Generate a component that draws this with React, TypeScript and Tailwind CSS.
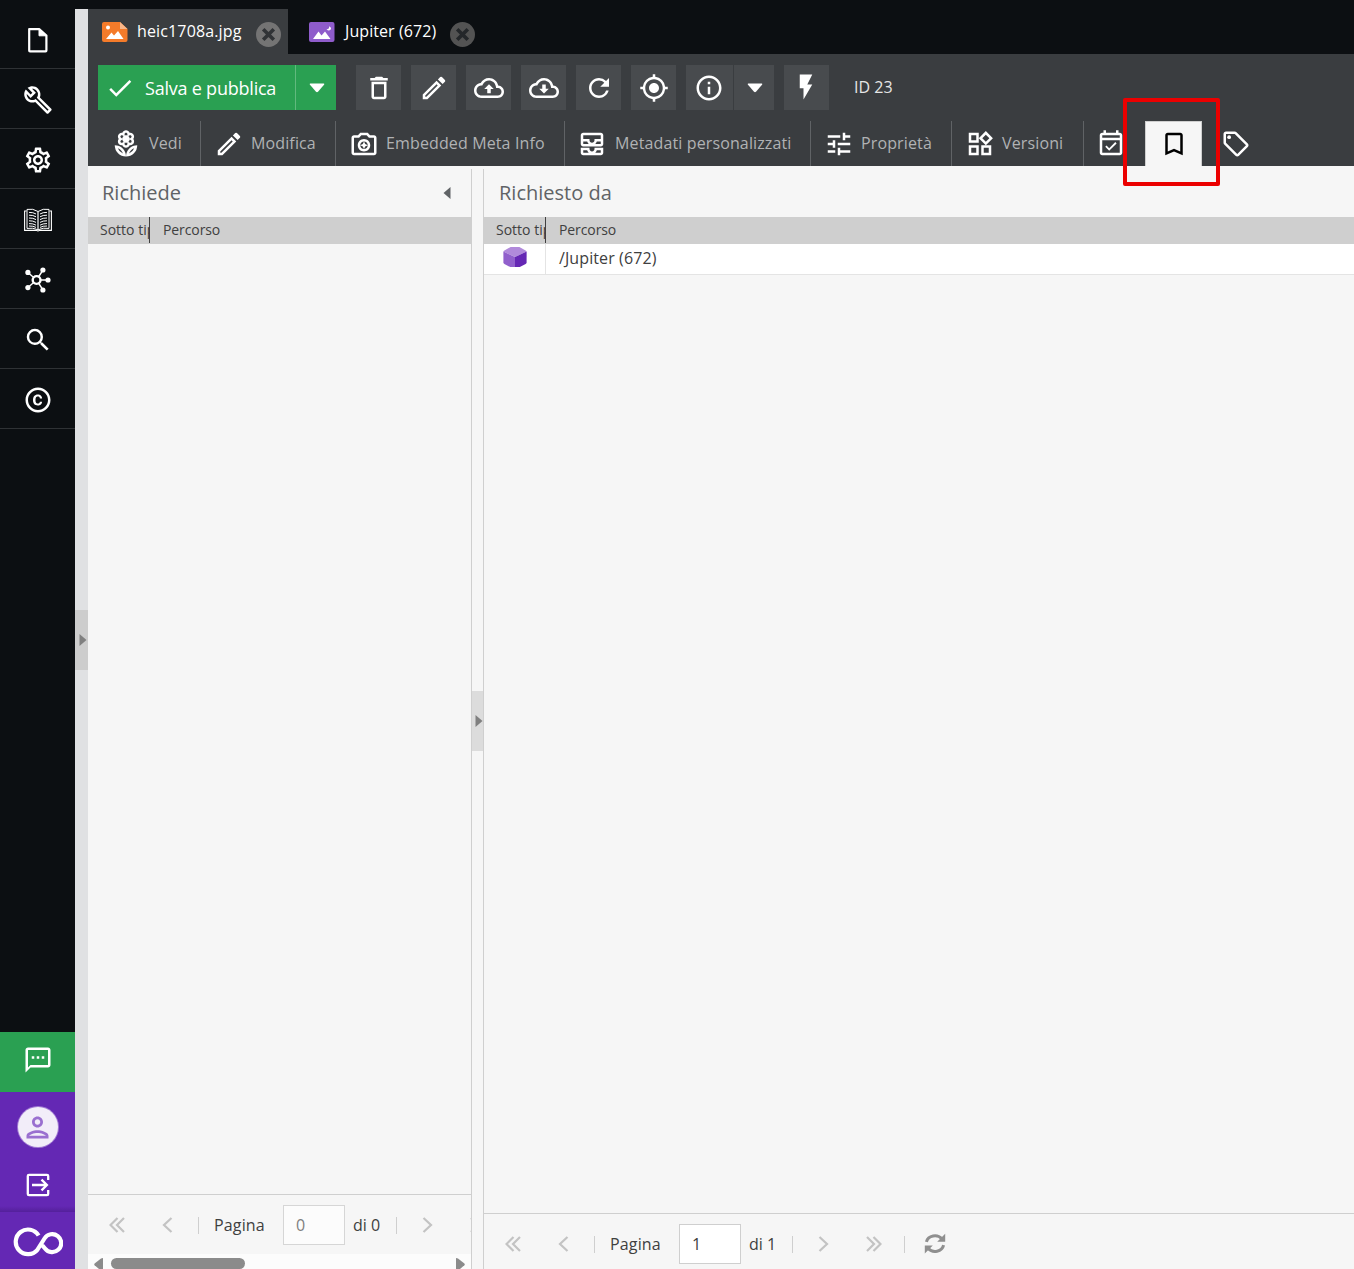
import React from 'react';
import {
  MdOutlineBuild,
  MdOutlineSettings,
  MdSearch,
  MdOutlineCopyright,
  MdOutlineTextsms,
  MdOutlinePerson,
  MdOutlineDelete,
  MdOutlineModeEdit,
  MdOutlineRefresh,
  MdMyLocation,
  MdInfoOutline,
  MdFlashOn,
  MdOutlineLocalFlorist,
  MdOutlineCameraEnhance,
  MdOutlineAllInbox,
  MdTune,
  MdOutlineWidgets,
  MdOutlineEventAvailable,
  MdBookmarkBorder,
  MdOutlineLocalOffer,
  MdCheck,
} from 'react-icons/md';

function FileIcon() {
  return (
    <svg width="22" height="26" viewBox="0 0 22 26" fill="none" stroke="#fff" strokeWidth="2.2" strokeLinejoin="round">
      <path d="M2.2 2.1H12.2L19.4 8.6V23.4Q19.4 24.3 18.6 24.3H3Q2.2 24.3 2.2 23.4Z" />
      <path d="M12 2V8.8H19Z" fill="#fff" strokeWidth="1" />
    </svg>
  );
}

function BookIcon() {
  return (
    <svg width="28" height="24" viewBox="0 0 28 24" fill="none" stroke="#fff">
      <path d="M2.5 3H.6V22.4H12.5Q14 23.4 15.5 22.4H27.4V3H25.5" strokeWidth="1.1" />
      <path d="M14 3.5Q9 .2 3 1.4V20.4Q9 19.4 14 21.8Q19 19.4 25 20.4V1.4Q19 .2 14 3.5Z" strokeWidth="1" />
      <path d="M14 3.5V21.8" strokeWidth="1.6" opacity=".75" />
      <path
        d="M5 4.4Q9 4.2 12 6M5 7.2Q9 7 12 8.8M5 10Q9 9.8 12 11.6M5 12.8Q9 12.6 12 14.4M5 15.6Q9 15.4 12 17.2M5 18Q9 17.8 12 19.4M23 4.4Q19 4.2 16 6M23 7.2Q19 7 16 8.8M23 10Q19 9.8 16 11.6M23 12.8Q19 12.6 16 14.4M23 15.6Q19 15.4 16 17.2M23 18Q19 17.8 16 19.4"
        strokeWidth="1"
      />
    </svg>
  );
}

function HubIcon() {
  return (
    <svg width="26" height="26" viewBox="0 0 26 26" fill="#fff" stroke="#fff">
      <path d="M11.5 13L3 5.4M11.5 13L18 3M11.5 13H23M11.5 13L18 23M11.5 13L3 20.6" strokeWidth="1.4" />
      <circle cx="11.6" cy="13" r="3.9" fill="#0c0f12" strokeWidth="2.4" />
      <g stroke="none">
        <circle cx="2.9" cy="5.4" r="2.6" />
        <circle cx="17.9" cy="3" r="2.6" />
        <circle cx="23" cy="13" r="2.6" />
        <circle cx="17.9" cy="23" r="2.6" />
        <circle cx="2.9" cy="20.6" r="2.6" />
      </g>
    </svg>
  );
}

function LogoutIcon() {
  return (
    <svg width="24" height="24" viewBox="0 0 24 24" fill="none" stroke="#fff" strokeWidth="2.3">
      <path d="M22.2 7V3Q22.2 1.8 21 1.8H3Q1.8 1.8 1.8 3V21Q1.8 22.2 3 22.2H21Q22.2 22.2 22.2 21V17" />
      <path d="M6 12H21M15.5 6.6L20.9 12L15.5 17.4" />
    </svg>
  );
}

function InfinityLogo() {
  return (
    <svg width="50" height="30" viewBox="0 0 50 30" fill="none" stroke="#fff" strokeWidth="4.2">
      <path d="M25.6 8.5A12.3 12.3 0 1 0 24.4 22.8L31.5 11.5A9 9 0 1 1 32 21.5L29.3 18.3" />
    </svg>
  );
}

function CloudIcon({ down }: { down?: boolean }) {
  return (
    <svg width="30" height="30" viewBox="0 0 24 24" fill="#fff">
      <path d="M19.35 10.04C18.67 6.59 15.64 4 12 4 9.11 4 6.6 5.64 5.35 8.04 2.34 8.36 0 10.91 0 14c0 3.31 2.69 6 6 6h13c2.76 0 5-2.24 5-5 0-2.64-2.05-4.78-4.65-4.96zM19 18H6c-2.21 0-4-1.79-4-4 0-2.05 1.53-3.76 3.56-3.97l1.07-.11.5-.95C8.08 7.14 9.94 6 12 6c2.62 0 4.88 1.86 5.39 4.43l.3 1.5 1.53.11c1.56.1 2.78 1.41 2.78 2.96 0 1.65-1.35 3-3 3z" />
      <path d={down ? 'M10.6 9.2h2.8v3.4h2.4L12 16.4 8.2 12.6h2.4z' : 'M10.6 16.2h2.8v-3.4h2.4L12 9 8.2 12.8h2.4z'} />
    </svg>
  );
}

function AssetIcon() {
  return (
    <svg width="26" height="20" viewBox="0 0 26 20">
      <path d="M2 0H18L25.5 7V18Q25.5 20 23.5 20H2Q0 20 0 18V2Q0 0 2 0Z" fill="#f47b2a" />
      <path d="M18 0L25.5 7H18Z" fill="#f9b689" />
      <circle cx="6" cy="5.6" r="2" fill="#fff" />
      <path d="M4 17L9.5 10.5L12 13.5L16 9L21.5 17Z" fill="#fff" />
    </svg>
  );
}

function ObjectIcon() {
  return (
    <svg width="26" height="20" viewBox="0 0 26 20">
      <rect width="25.5" height="20" rx="2" fill="#8f5ccb" />
      <path d="M4 17L9.5 9.5L12.5 13.5L16 9.5L21.5 17Z" fill="#fff" />
      <path d="M20 4.3Q20.8 7.3 17.4 7.4Q20.6 9.6 22 7Q22.5 5.2 20 4.3Z" fill="#fff" />
    </svg>
  );
}

function CloseIcon({ dim }: { dim?: boolean }) {
  return (
    <svg className="mt-[5px]" width="25" height="25" viewBox="0 0 25 25">
      <circle cx="12.5" cy="12.5" r="12.5" fill={dim ? '#535353' : '#747474'} />
      <path d="M7.2 7.2L17.8 17.8M17.8 7.2L7.2 17.8" stroke={dim ? '#24272a' : '#303336'} strokeWidth="3.6" />
    </svg>
  );
}

function CubeIcon() {
  return (
    <svg width="24" height="20" viewBox="0 0 24 20">
      <path d="M.4 4.6Q.6 3.8 1.4 3.4L7.6 0H16.4L22.6 3.4Q23.4 3.8 23.6 4.6L12 10Z" fill="#b18adb" />
      <path d="M.4 4.6L12 10V20H7.2L1.4 17Q.4 16.4 .4 15.2Z" fill="#9160cc" />
      <path d="M23.6 4.6L12 10V20H16.8L22.6 17Q23.6 16.4 23.6 15.2Z" fill="#6527b4" />
    </svg>
  );
}

function Caret() {
  return (
    <svg width="16" height="10" viewBox="0 0 16 10" fill="#fff">
      <path d="M1.2 .5H14.8Q15.8 .8 15 1.8L9 8.8Q8 9.7 7 8.8L1 1.8Q.2 .8 1.2 .5Z" />
    </svg>
  );
}

function Triangle({ left }: { left?: boolean }) {
  return (
    <svg className="shrink-0" width="8" height="12" viewBox="0 0 8 12" fill="currentColor">
      <path d={left ? 'M7.5 0V12L.5 6Z' : 'M.5 0V12L7.5 6Z'} />
    </svg>
  );
}

function ScrollArrow({ left }: { left?: boolean }) {
  return (
    <svg className="shrink-0" width="9" height="11" viewBox="0 0 9 11" fill="currentColor">
      <path d={left ? 'M9 0V11H5L.6 7.2Q-.2 6.3 .6 5.4L7 .4Z' : 'M0 0V11H4L8.4 7.2Q9.2 6.3 8.4 5.4L2 .4Z'} />
    </svg>
  );
}

function Chevron({ right, double }: { right?: boolean; double?: boolean }) {
  const d = double ? 'M8.5 1L1.5 8L8.5 15M15 1L8 8L15 15' : 'M12.5 1L5 8L12.5 15';
  return (
    <svg
      className={right ? 'h-4 w-4 shrink-0 -scale-x-100' : 'h-4 w-4 shrink-0'}
      viewBox="0 0 16 16"
      fill="none"
      stroke="#c3c3c3"
      strokeWidth="2.2"
    >
      <path d={d} />
    </svg>
  );
}

function RefreshIcon() {
  return (
    <svg width="22" height="22" viewBox="0 0 22 22" fill="none" stroke="#8f8f8f" strokeWidth="3">
      <path d="M2.4 8.8A8.8 7.9 0 0 1 17.8 5.8M19.6 12.2A8.8 7.9 0 0 1 4.2 15.6" />
      <path d="M21.2 .8V8.8H13.2ZM.8 20.4V12.4H8.8Z" fill="#8f8f8f" stroke="none" />
    </svg>
  );
}

const menuItems = [
  <FileIcon />,
  <MdOutlineBuild size={30} />,
  <MdOutlineSettings size={30} />,
  <BookIcon />,
  <HubIcon />,
  <MdSearch size={30} />,
  <MdOutlineCopyright size={30} />,
];

const tools = [
  <MdOutlineDelete size={30} />,
  <MdOutlineModeEdit size={30} />,
  <CloudIcon />,
  <CloudIcon down />,
  <MdOutlineRefresh size={30} />,
  <MdMyLocation size={30} />,
];

const tabs = [
  { label: 'Vedi', icon: <MdOutlineLocalFlorist size={30} />, style: 'w-[113px] gap-2 pl-[23px]' },
  { label: 'Modifica', icon: <MdOutlineModeEdit size={30} />, style: 'w-[135px] gap-[7px] pl-[13px]' },
  { label: 'Embedded Meta Info', icon: <MdOutlineCameraEnhance size={30} />, style: 'w-[229px] gap-[7px] pl-[13px]' },
  { label: 'Metadati personalizzati', icon: <MdOutlineAllInbox size={30} />, style: 'w-[246px] gap-2 pl-3' },
  { label: 'Proprietà', icon: <MdTune size={30} />, style: 'w-[141px] gap-[7px] pl-[13px]' },
  { label: 'Versioni', icon: <MdOutlineWidgets size={30} />, style: 'w-[132px] gap-[7px] pl-[13px]' },
];

function Sidebar() {
  return (
    <div className="flex w-[75px] shrink-0 flex-col bg-[#0c0f12] pt-[9px] text-white">
      {menuItems.map((icon, i) => (
        <div key={i} className="flex h-[60px] items-center justify-center border-b border-[#2f3235] pt-[3px]">
          {icon}
        </div>
      ))}
      <div className="mt-auto flex h-[60px] items-center justify-center bg-[#2aa052] pb-[5px] pl-px">
        <MdOutlineTextsms size={30} />
      </div>
      <div className="flex h-[120px] flex-col items-center bg-[#6428b4] bg-linear-to-b from-[#6428b4] from-95% to-[#54209b] pt-[15px]">
        <div className="flex h-10 w-10 items-center justify-center rounded-full bg-[#f2edf9] text-[#9a6fd0] ring-1 ring-[#a27bd4]">
          <MdOutlinePerson size={33} />
        </div>
        <div className="mt-[26px]">
          <LogoutIcon />
        </div>
      </div>
      <div className="flex h-[57px] items-center justify-center bg-[#6428b4] pt-0.5">
        <InfinityLogo />
      </div>
    </div>
  );
}

function DocumentTabs() {
  return (
    <div className="flex h-[54px] items-end bg-[#0c0f12] text-base tracking-[0.14px] text-white">
      <div className="flex h-[45px] w-[200px] items-center bg-[#3a3d40] pl-3.5">
        <AssetIcon />
        <span className="ml-[9px] w-[119px] pb-0.5 whitespace-nowrap">heic1708a.jpg</span>
        <CloseIcon />
      </div>
      <div className="flex h-[45px] items-center pl-[21px]">
        <ObjectIcon />
        <span className="ml-2.5 w-[105px] pb-0.5 tracking-[0.08px] whitespace-nowrap">Jupiter (672)</span>
        <CloseIcon dim />
      </div>
    </div>
  );
}

function Toolbar() {
  return (
    <div className="flex h-[67px] items-start bg-[#3a3d40] pt-[11px] pl-2.5 text-white">
      <div className="flex h-[45px] w-[238px] bg-[#2aa052]">
        <div className="flex w-[198px] items-center border-r border-[#62b97e] pl-[7px]">
          <MdCheck size={30} />
          <span className="ml-2.5 text-[18px] leading-[26px] tracking-[-0.22px] whitespace-nowrap">Salva e pubblica</span>
        </div>
        <div className="flex flex-1 items-center justify-center pl-0.5">
          <Caret />
        </div>
      </div>
      <div className="ml-5 flex gap-2.5">
        {tools.map((icon, i) => (
          <div key={i} className="flex h-[45px] w-[45px] items-center justify-center bg-[#484b4e]">
            {icon}
          </div>
        ))}
        <div className="flex h-[45px] gap-px">
          <div className="flex w-[47px] items-center bg-[#484b4e] pl-2">
            <MdInfoOutline size={30} />
          </div>
          <div className="flex w-10 items-center justify-center bg-[#484b4e] pl-0.5">
            <Caret />
          </div>
        </div>
        <div className="flex h-[45px] w-[45px] items-center bg-[#484b4e] pb-px pl-[7px]">
          <MdFlashOn size={30} />
        </div>
      </div>
      <span className="ml-[25px] leading-[44px] text-[#e6e6e6]">ID 23</span>
    </div>
  );
}

function EditorTabs() {
  return (
    <div className="flex h-[45px] bg-[#3a3d40] text-white">
      {tabs.map(tab => (
        <div key={tab.label} className={`flex shrink-0 items-center border-r border-[#606366] ${tab.style}`}>
          <span className="shrink-0">{tab.icon}</span>
          <span className="pb-0.5 tracking-[0.13px] whitespace-nowrap text-[#b0b2b4]">{tab.label}</span>
        </div>
      ))}
      <div className="flex w-[61px] items-center pl-3">
        <MdOutlineEventAvailable size={30} />
      </div>
      <div className="relative flex w-[57px] items-center justify-center border border-b-0 border-[#cfcfcf] bg-[#f6f6f6] text-black">
        <MdBookmarkBorder size={30} />
        <div className="absolute -top-6 -left-[23px] h-[88px] w-[97px] rounded-xs border-4 border-[#eb0000]" />
      </div>
      <div className="flex items-center pl-[19px]">
        <MdOutlineLocalOffer size={30} />
      </div>
    </div>
  );
}

function GridHeader() {
  return (
    <div className="flex h-[27px] shrink-0 bg-[#cfcfcf] text-sm leading-[26px] text-[#404040]">
      <div className="h-[26px] w-[62px] overflow-hidden border-r border-[#404040] pl-3 whitespace-nowrap">Sotto tipo</div>
      <div className="pl-[13px] tracking-[-0.1px]">Percorso</div>
    </div>
  );
}

function Pager({ page, total, empty }: { page: string; total: string; empty?: boolean }) {
  return (
    <div className="flex h-[60px] shrink-0 items-center overflow-hidden border-t border-[#cfcfcf] pt-px pl-[21px] text-base text-[#404040]">
      <Chevron double />
      <div className="ml-[34px]">
        <Chevron />
      </div>
      <div className="ml-[23px] h-[17px] w-px shrink-0 bg-[#cfcfcf]" />
      <span className="ml-[15px] w-[69px] shrink-0 tracking-[0.15px]">Pagina</span>
      <div
        className={
          empty
            ? 'flex h-10 w-[62px] shrink-0 items-center border border-[#d6d6d6] bg-[#fcfcfc] pl-3 text-[#808080]'
            : 'flex h-10 w-[62px] shrink-0 items-center border border-[#cfcfcf] bg-white pl-3'
        }
      >
        {page}
      </div>
      <span className="ml-2 w-[43px] shrink-0 whitespace-nowrap">di {total}</span>
      <div className="h-[17px] w-px shrink-0 bg-[#cfcfcf]" />
      <div className="ml-[23px]">
        <Chevron right />
      </div>
      <div className="ml-[34px]">
        <Chevron right double />
      </div>
      {!empty && (
        <>
          <div className="ml-[22px] h-[17px] w-px bg-[#cfcfcf]" />
          <div className="ml-[19px]">
            <RefreshIcon />
          </div>
        </>
      )}
    </div>
  );
}

export default function App() {
  return (
    <div className="flex h-[1269px] w-[1354px] overflow-hidden bg-[#0c0f12] font-['Open_Sans','Noto_Sans',sans-serif] text-base">
      <Sidebar />
      <div className="mt-[9px] flex w-[13px] shrink-0 flex-col bg-[#e0e1e3] pt-[601px]">
        <div className="flex h-[60px] items-center justify-center bg-[#cdcdcd] pb-px pl-0.5 text-[#808080]">
          <Triangle />
        </div>
      </div>
      <div className="flex min-w-0 flex-1 flex-col">
        <DocumentTabs />
        <Toolbar />
        <EditorTabs />
        <div className="flex min-h-0 flex-1 bg-[#f6f6f6] pt-[3px]">
          <div className="flex w-96 shrink-0 flex-col border-r border-[#cfcfcf]">
            <div className="flex h-12 shrink-0 items-center justify-between pr-5 pl-[15px] text-xl text-[#606366]">
              <span className="-ml-px">Richiede</span>
              <Triangle left />
            </div>
            <GridHeader />
            <div className="flex-1" />
            <Pager page="0" total="0" empty />
            <div className="flex h-[15px] shrink-0 items-end justify-between overflow-hidden bg-[#fcfcfc] pr-1.5 pl-1.5 text-[#8b8b8b]">
              <div className="flex items-end gap-2">
                <ScrollArrow left />
                <div className="h-[11px] w-[134px] rounded-full bg-[#8b8b8b]" />
              </div>
              <ScrollArrow />
            </div>
          </div>
          <div className="flex w-[11px] shrink-0 flex-col pt-[522px]">
            <div className="flex h-[60px] items-center justify-center bg-[#dcdcdc] pb-px pl-0.5 text-[#808080]">
              <Triangle />
            </div>
          </div>
          <div className="flex min-w-0 flex-1 flex-col border-l border-[#cfcfcf]">
            <div className="flex h-12 shrink-0 items-center pl-[15px] text-xl text-[#606366]">Richiesto da</div>
            <GridHeader />
            <div className="flex h-[31px] shrink-0 border-b border-[#e4e4e4] bg-white text-[#404040]">
              <div className="flex w-[62px] justify-center border-r border-[#e4e4e4] pt-[3px]">
                <CubeIcon />
              </div>
              <div className="pl-[13px] leading-7 tracking-[0.1px]">/Jupiter (672)</div>
            </div>
            <div className="flex-1" />
            <div className="h-14 shrink-0 overflow-hidden">
              <Pager page="1" total="1" />
            </div>
          </div>
        </div>
      </div>
    </div>
  );
}
